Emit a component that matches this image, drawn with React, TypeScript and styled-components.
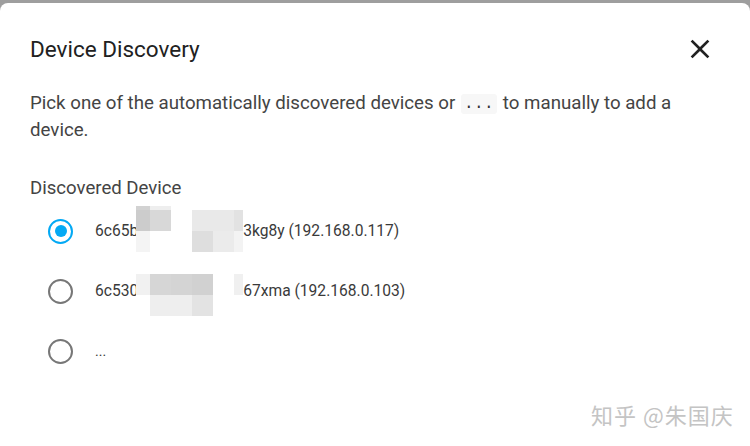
import React from 'react'
import styled, { createGlobalStyle } from 'styled-components'

const GlobalStyle = createGlobalStyle`
  html, body {
    margin: 0;
    padding: 0;
    background: #9e9e9e;
    overflow: hidden;
  }
  body {
    font-family: Roboto, "Noto Sans CJK SC", sans-serif;
  }
`

interface Device {
  id: string
  head: string
  tail: string
  mosaic?: MosaicSpec
  checked?: boolean
}

interface MosaicSpec {
  rows: number[]
  cells: string[][]
  shift: number
}

const COLS = [14, 21, 21, 21, 21, 9]

const devices: Device[] = [
  {
    id: 'a',
    head: '6c65b',
    tail: '3kg8y (192.168.0.117)',
    checked: true,
    mosaic: {
      rows: [4, 21, 21],
      shift: -4,
      cells: [
        ['#d2d2d2', '#eeeeee', '#fff', '#fff', '#fff', '#fff'],
        ['#cccccc', '#d8d8d8', '#fff', '#e9e9e9', '#e9e9e9', '#e2e2e2'],
        ['#f4f4f4', '#fff', '#fff', '#dedede', '#ebebeb', '#f3f3f3'],
      ],
    },
  },
  {
    id: 'b',
    head: '6c530',
    tail: '67xma (192.168.0.103)',
    mosaic: {
      rows: [21, 21],
      shift: 8,
      cells: [
        ['#f1f1f1', '#d6d6d6', '#d4d4d4', '#d1d1d1', '#fff', '#f0f0f0'],
        ['#fff', '#eeeeee', '#eeeeee', '#e3e3e3', '#fff', '#fff'],
      ],
    },
  },
  { id: 'c', head: '...', tail: '' },
]

function CloseIcon(): JSX.Element {
  return (
    <svg width="32" height="32" viewBox="0 0 24 24" aria-hidden="true">
      <path
        fill="#212121"
        d="M19 6.41L17.59 5 12 10.59 6.41 5 5 6.41 10.59 12 5 17.59 6.41 19 12 13.41 17.59 19 19 17.59 13.41 12z"
      />
    </svg>
  )
}

function Mosaic({ spec }: { spec: MosaicSpec }): JSX.Element {
  return (
    <MosaicGrid $rows={spec.rows} $shift={spec.shift}>
      {spec.cells.flatMap((row, r) =>
        row.map((c, i) => <MosaicCell key={`${r}-${i}`} $color={c} />)
      )}
    </MosaicGrid>
  )
}

export default function App(): JSX.Element {
  return (
    <>
      <GlobalStyle />
      <Dialog>
        <Header>
          <Title>Device Discovery</Title>
          <CloseButton aria-label="Close">
            <CloseIcon />
          </CloseButton>
        </Header>

        <Description>
          Pick one of the automatically discovered devices or <Code>...</Code> to
          manually to add a device.
        </Description>

        <Label>Discovered Device</Label>

        <List>
          {devices.map((d) => (
            <Option key={d.id}>
              <Radio $checked={!!d.checked} />
              <OptionText $small={!d.mosaic}>
                {d.head}
                {d.mosaic && <Mosaic spec={d.mosaic} />}
                {d.tail}
              </OptionText>
            </Option>
          ))}
        </List>

        <Watermark>知乎 @朱国庆</Watermark>
      </Dialog>
    </>
  )
}

const Dialog = styled.div`
  position: relative;
  margin-top: 3px;
  height: 460px;
  background: #fff;
  border-radius: 8px 8px 0 0;
  padding: 22px 40px 0 30px;
  box-sizing: border-box;
`

const Header = styled.header`
  display: flex;
  flex-direction: row;
  align-items: center;
  justify-content: space-between;
  height: 48px;
`

const Title = styled.h2`
  margin: 0;
  font-size: 22.5px;
  font-weight: 400;
  color: #212121;
`

const CloseButton = styled.button`
  display: flex;
  align-items: center;
  justify-content: center;
  width: 40px;
  height: 40px;
  margin-right: -10px;
  padding: 0;
  border: none;
  background: transparent;
`

const Description = styled.p`
  margin: 17px 0 0 0;
  font-size: 18.7px;
  line-height: 27px;
  color: #444;
`

const Code = styled.code`
  display: inline-block;
  font-family: "Liberation Mono", monospace;
  font-size: 16px;
  line-height: 20px;
  padding: 0 3px;
  margin: 0 1px;
  background: #f7f7f7;
  border-radius: 3px;
  color: #333;
  letter-spacing: 0.5px;
  vertical-align: 1px;
`

const Label = styled.div`
  margin-top: 32px;
  font-size: 18.6px;
  line-height: 24px;
  color: #444;
`

const List = styled.div`
  display: flex;
  flex-direction: column;
  margin-top: 1px;
`

const Option = styled.div`
  display: flex;
  flex-direction: row;
  align-items: center;
  height: 60px;
`

const Radio = styled.span<{ $checked: boolean }>`
  box-sizing: border-box;
  width: 25px;
  height: 25px;
  margin-left: 18px;
  margin-right: 22px;
  border-radius: 50%;
  border: 2px solid ${(p) => (p.$checked ? '#03a9f4' : '#777')};
  display: flex;
  align-items: center;
  justify-content: center;
  flex-shrink: 0;

  &::after {
    content: '';
    display: ${(p) => (p.$checked ? 'block' : 'none')};
    width: 12px;
    height: 12px;
    border-radius: 50%;
    background: #03a9f4;
  }
`

const OptionText = styled.div<{ $small: boolean }>`
  display: flex;
  align-items: center;
  font-size: ${(p) => (p.$small ? '14px' : '15.6px')};
  color: #3a3a3a;
  white-space: pre;
`

const MosaicGrid = styled.span<{ $rows: number[]; $shift: number }>`
  display: grid;
  grid-template-columns: ${COLS.map((c) => `${c}px`).join(' ')};
  grid-template-rows: ${(p) => p.$rows.map((r) => `${r}px`).join(' ')};
  margin-top: ${(p) => p.$shift}px;
  margin-left: -2px;
`

const MosaicCell = styled.span<{ $color: string }>`
  background: ${(p) => p.$color};
`

const Watermark = styled.div`
  position: absolute;
  left: 591px;
  top: 395px;
  font-family: "Noto Sans CJK SC", sans-serif;
  font-size: 22px;
  color: #c4c4c4;
  letter-spacing: 1px;
  text-shadow: 0 0 1px #fff;
`
